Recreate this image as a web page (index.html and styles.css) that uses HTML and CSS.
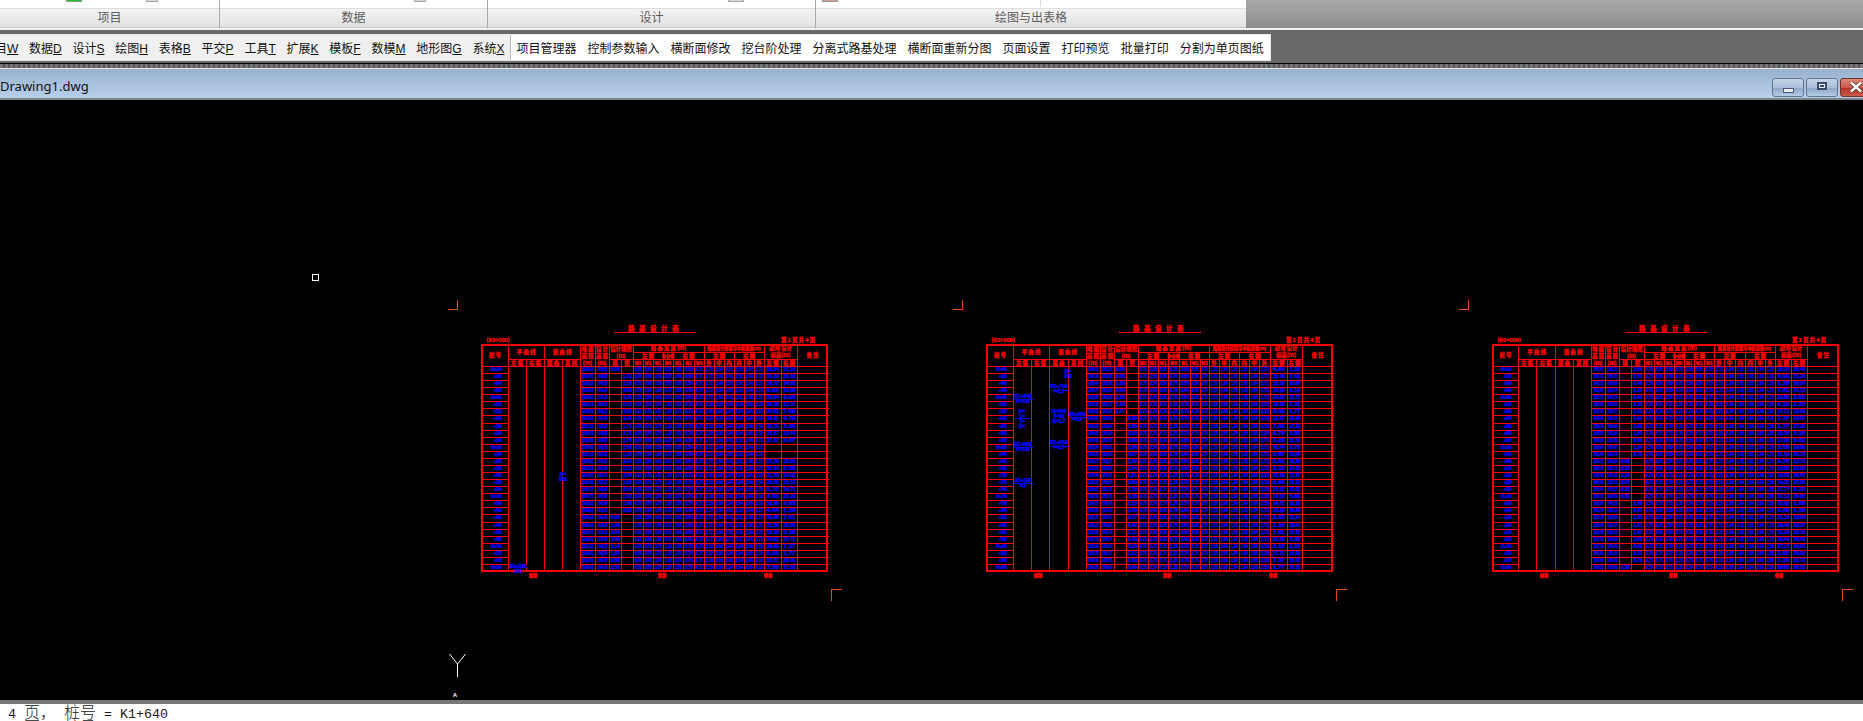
FILE: index.html
```html
<!DOCTYPE html>
<html lang="zh-CN">
<head>
    <meta charset="UTF-8">
    <title>Drawing1.dwg</title>
    <link rel="stylesheet" href="styles.css">
</head>
<body>
    <div class="ribbon">
        <div class="group group-project">
            <div class="group-body">
                <span class="chip chip-green chip-a"></span>
                <span class="chip chip-b"></span>
            </div>
            <div class="group-label">项目</div>
        </div>
        <div class="group group-data">
            <div class="group-body"><span class="chip chip-c"></span></div>
            <div class="group-label">数据</div>
        </div>
        <div class="group group-design">
            <div class="group-body"><span class="chip chip-d"></span></div>
            <div class="group-label">设计</div>
        </div>
        <div class="group group-output">
            <div class="group-body">
                <span class="chip chip-red chip-e"></span>
                <span class="tick"></span>
            </div>
            <div class="group-label">绘图与出表格</div>
        </div>
        <div class="ribbon-rest"></div>
    </div>

    <div class="toolbar-row">
        <div class="toolbar">
            <div class="menus">
                <span class="menu">项目<u>W</u></span>
                <span class="menu">数据<u>D</u></span>
                <span class="menu">设计<u>S</u></span>
                <span class="menu">绘图<u>H</u></span>
                <span class="menu">表格<u>B</u></span>
                <span class="menu">平交<u>P</u></span>
                <span class="menu">工具<u>T</u></span>
                <span class="menu">扩展<u>K</u></span>
                <span class="menu">模板<u>F</u></span>
                <span class="menu">数模<u>M</u></span>
                <span class="menu">地形图<u>G</u></span>
                <span class="menu">系统<u>X</u></span>
            </div>
            <div class="commands">
                <span class="command">项目管理器</span>
                <span class="command">控制参数输入</span>
                <span class="command">横断面修改</span>
                <span class="command">挖台阶处理</span>
                <span class="command">分离式路基处理</span>
                <span class="command">横断面重新分图</span>
                <span class="command">页面设置</span>
                <span class="command">打印预览</span>
                <span class="command">批量打印</span>
                <span class="command">分割为单页图纸</span>
            </div>
        </div>
    </div>

    <div class="mdi-edge"></div>

    <div class="titlebar">
        <span class="doc-name">Drawing1.dwg</span>
        <div class="win-buttons">
            <button class="win-btn"><span class="glyph-min"></span></button>
            <button class="win-btn"><span class="glyph-max"></span></button>
            <button class="win-btn win-close">
                <svg width="14" height="12" viewBox="0 0 14 12">
                    <path d="M2 1.5 L12 10.5 M12 1.5 L2 10.5" stroke="#5a2a2a" stroke-width="4"/>
                    <path d="M2 1.5 L12 10.5 M12 1.5 L2 10.5" stroke="#fff" stroke-width="2.4"/>
                </svg>
            </button>
        </div>
    </div>

    <div class="canvas">
        <svg id="drawing" width="1863" height="600" viewBox="0 100 1863 600"></svg>
    </div>

    <div class="status-edge"></div>
    <div class="console">
        <div class="console-line"> 4 <span class="cn">页，</span> <span class="cn">桩号</span> = K1+640</div>
        <div class="console-line"> 5 <span class="cn">页，</span> <span class="cn">桩号</span> = K1+660</div>
    </div>

    <script src="drawing.js"></script>
</body>
</html>
```

FILE: styles.css
```css
* {
    box-sizing: border-box;
}
body {
    margin: 0;
    height: 100vh;
    display: flex;
    flex-direction: column;
    overflow: hidden;
    background-color: #000;
    font-family: "Liberation Sans", "Noto Sans CJK SC", sans-serif;
    font-size: 12px;
}

/* ribbon, only its bottom edge is on screen */
.ribbon {
    display: flex;
    height: 30px;
    flex-shrink: 0;
    border-bottom: 2px solid #f4f4f4;
}
.group {
    flex-shrink: 0;
    border-right: 1px solid #a8a8a8;
}
.group-project { width: 220px; }
.group-data { width: 268px; }
.group-design { width: 328px; }
.group-output { width: 430px; border-right: none; }
.group-body {
    display: flex;
    height: 8px;
    background-color: #fff;
}
.group-label {
    height: 20px;
    line-height: 19px;
    text-align: center;
    color: #5c5c5c;
    background: linear-gradient(#f3f3f3, #e2e2e2);
    border-top: 1px solid #dedede;
    border-bottom: 1px solid #c8c8c8;
}
.chip {
    width: 12px;
    height: 2px;
    background-color: #d4d4d4;
    border: 1px solid #a8a8a8;
    border-top: none;
}
.chip-green { width: 16px; background-color: #22c02a; border-color: #8a9a8a; }
.chip-red { width: 16px; background-color: #c9a090; border-color: #999; }
.chip-a { margin-left: 66px; }
.chip-b { margin-left: 64px; }
.chip-c { margin-left: 194px; }
.chip-d { margin-left: 240px; width: 16px; }
.chip-e { margin-left: 6px; }
.tick {
    margin-left: 202px;
    width: 1px;
    height: 7px;
    background-color: #d8d8d8;
}
.ribbon-rest {
    flex: 1;
    background: linear-gradient(#a9a9a9, #8d8d8d);
}

/* toolbar */
.toolbar-row {
    height: 33px;
    flex-shrink: 0;
    padding-top: 4px;
    background-color: #686868;
}
.toolbar {
    display: flex;
    width: 1271px;
    height: 27px;
    color: #111;
    border: 1px solid #e8e8e8;
    border-left: none;
    background-color: #fff;
}
.menus {
    display: flex;
    width: 511px;
    flex-shrink: 0;
    overflow: hidden;
    align-items: center;
    background-color: #f0f0f0;
    border-right: 1px solid #b8b8b8;
}
.menu {
    flex-shrink: 0;
    padding: 0 5.4px;
    white-space: nowrap;
}
.menu:first-child {
    margin-left: -22.5px;
}
.commands {
    display: flex;
    align-items: center;
}
.command {
    flex-shrink: 0;
    padding: 0 5.5px;
    white-space: nowrap;
}

.mdi-edge {
    height: 5px;
    flex-shrink: 0;
    border-top: 1px solid #000;
    background: repeating-linear-gradient(90deg, #777 0, #777 3px, #555 3px, #555 5px);
}

/* document window title */
.titlebar {
    display: flex;
    align-items: center;
    justify-content: space-between;
    height: 32px;
    flex-shrink: 0;
    border-top: 1px solid #e6e6e6;
    border-bottom: 2px solid #7c8288;
    background: linear-gradient(#98b1cf, #b8d0ea);
}
.doc-name {
    margin-top: 4px;
    font-family: "Noto Sans", sans-serif;
    font-size: 13px;
    color: #111;
}
.win-buttons {
    display: flex;
    gap: 2px;
    margin-right: -9px;
    margin-top: 7px;
}
.win-btn {
    display: flex;
    align-items: center;
    justify-content: center;
    width: 32px;
    height: 19px;
    padding: 0;
    border: 1px solid #66758f;
    border-radius: 3px;
    background: linear-gradient(#c5d5e8 0, #a9bfd9 50%, #8ba6c6 52%, #b4cbe4 100%);
}
.win-close {
    background: linear-gradient(#dc8a7c 0, #c8584a 50%, #b03226 52%, #c85a4a 100%);
    border-color: #70332c;
}
.glyph-min {
    display: block;
    width: 11px;
    height: 5px;
    margin-top: 6px;
    background-color: #e8eef6;
    border: 1px solid #4c5a76;
}
.glyph-max {
    display: block;
    width: 10px;
    height: 8px;
    margin-top: -2px;
    background-color: #3d4a66;
    border: 2px solid #3d4a66;
    box-shadow: inset 0 0 0 1px #e8eef6;
}

/* model space */
.canvas {
    flex: 1;
    min-height: 0;
    background-color: #000;
    overflow: hidden;
}
#drawing {
    display: block;
}
#drawing .grid {
    stroke: #f00;
    stroke-width: 1;
    shape-rendering: crispEdges;
}
#drawing .frame {
    fill: none;
    stroke: #f00;
    stroke-width: 2;
    shape-rendering: crispEdges;
}
#drawing .mark {
    fill: none;
    stroke: #e64a19;
    stroke-width: 1;
    shape-rendering: crispEdges;
}
#drawing .cell {
    fill: #00f;
    stroke: #00f;
    stroke-width: 0.35;
    font-family: "Liberation Sans", sans-serif;
    font-size: 4.6px;
    font-weight: 700;
    text-anchor: middle;
}
#drawing .note {
    fill: #00f;
    stroke: #00f;
    stroke-width: 0.4;
    font-family: "Liberation Sans", sans-serif;
    font-size: 4.8px;
    font-weight: 700;
    text-anchor: middle;
}
#drawing .note-line {
    stroke: #00f;
    stroke-width: 1;
    shape-rendering: crispEdges;
}
#drawing .head {
    fill: #f00;
    stroke: #f00;
    stroke-width: 0.3;
    font-family: "Noto Sans CJK SC", sans-serif;
    font-size: 5.4px;
    font-weight: 700;
    text-anchor: middle;
}
#drawing .head-small {
    font-size: 4.2px;
}
#drawing .title {
    font-size: 6.4px;
    letter-spacing: 1.6px;
}
#drawing .ucs {
    fill: none;
    stroke: #fff;
    stroke-width: 1;
}
#drawing .ucs-label {
    fill: #fff;
    font-family: "Liberation Sans", sans-serif;
    font-size: 6px;
    font-weight: 700;
    text-anchor: middle;
}
#drawing .pickbox {
    fill: none;
    stroke: #fff;
    stroke-width: 1;
    shape-rendering: crispEdges;
}

/* command line */
.status-edge {
    height: 4px;
    flex-shrink: 0;
    background-color: #777;
}
.console {
    height: 17px;
    flex-shrink: 0;
    overflow: hidden;
    background-color: #fff;
    color: #222;
    font-family: "Liberation Mono", "Noto Sans CJK SC", monospace;
    font-size: 13.33px;
}
.console-line {
    height: 15px;
    line-height: 15px;
    white-space: pre;
}
.cn {
    font-family: "Noto Sans CJK SC", sans-serif;
    font-size: 16px;
    font-weight: 300;
}
```

FILE: drawing.js
```js
var svg = document.getElementById('drawing');
var NS = 'http://www.w3.org/2000/svg';

var ROW_TOP = 366, ROW_H = 7.07, ROWS = 29, BOTTOM = 571;

var tables = [
    {
        left: 481, start: 0,
        cols: [482,508,526,544,562,580,595,609,621,633,643,653,663,673,683,694,704,714,724,734,744,754,764,781,797,828],
        fillCol7: [0,21,22,23,24,25,26,27,28],
        noElev: [11,12],
        page: '第 1 页 共 4 页',
        notes: [
            { x: 563, y: 476, lines: ['R=', '600'] },
            { x: 518, y: 568, lines: ['K0+560', 'JD1'], rule: [508, 527, 567] }
        ]
    },
    {
        left: 986, start: 20,
        cols: [987,1013,1031,1049,1068,1086,1100,1114,1126,1138,1148,1158,1168,1179,1190,1200,1209,1219,1229,1239,1249,1259,1270,1287,1302,1333],
        fillCol7: [0,1,2,3,4,5,6],
        noElev: [],
        page: '第 2 页 共 4 页',
        notes: [
            { x: 1068, y: 373, lines: ['R=', '750'] },
            { x: 1059, y: 388, lines: ['K0+790', 'i=1.2'], rule: [1050, 1068, 390] },
            { x: 1023, y: 398, lines: ['ZH+840', 'A=180'], rule: [1013, 1032, 399] },
            { x: 1022, y: 413, lines: ['R=', 'L=', 'T=', 'E='], rule: [1014, 1029, 418] },
            { x: 1059, y: 413, lines: ['R=900', 'T=56', 'E=1.7'] },
            { x: 1077, y: 416, lines: ['K0+960', 'i=0.9'], rule: [1068, 1087, 417] },
            { x: 1023, y: 446, lines: ['HZ+960', 'A=180'], rule: [1013, 1032, 447] },
            { x: 1059, y: 444, lines: ['K1+010', 'i=1.5'], rule: [1049, 1069, 446] },
            { x: 1023, y: 482, lines: ['JD+120', 'K1'], rule: [1013, 1032, 483] }
        ]
    },
    {
        left: 1492, start: 40,
        cols: [1493,1518,1536,1555,1573,1591,1605,1619,1631,1644,1654,1664,1674,1684,1694,1704,1714,1724,1735,1745,1755,1765,1775,1791,1807,1839],
        fillCol7: [13,14,15,16,17,18,28],
        noElev: [],
        page: '第 3 页 共 4 页',
        notes: []
    }
];

var widthsA = ['0.75','3.50','3.50','0.75','3.50','3.50','0.75','1.72','1.64','1.51','1.51','1.64','1.72'];
var widthsB = ['0.75','3.75','3.75','1.25','3.75','3.75','0.75','2.18','2.06','1.94','1.94','2.06','2.18'];

function add(tag, attrs, text) {
    var el = document.createElementNS(NS, tag);
    for (var key in attrs) {
        el.setAttribute(key, attrs[key]);
    }
    if (text !== undefined) {
        el.textContent = text;
    }
    svg.appendChild(el);
    return el;
}

function line(x1, y1, x2, y2, cls) {
    add('line', { x1: x1 + 0.5, y1: y1 + 0.5, x2: x2 + 0.5, y2: y2 + 0.5, 'class': cls || 'grid' });
}

function head(x, y, text, extra) {
    add('text', { x: x, y: y, 'class': 'head' + (extra ? ' ' + extra : '') }, text);
}

// simple repeatable numbers, the table is too small to read anyway
function rnd(seed) {
    var v = Math.sin(seed * 12.9898) * 43758.5453;
    return v - Math.floor(v);
}

function drawHeader(t) {
    var c = t.cols;
    function mid(a, b) { return (c[a] + c[b]) / 2; }

    // verticals that run the whole header height
    [1,3,5,6,7,9,16,22,24].forEach(function(i) {
        line(c[i], 344, c[i], ROW_TOP);
    });
    [2,4,8,10,11,12,13,14,15,17,18,19,20,21,23].forEach(function(i) {
        line(c[i], 359, c[i], ROW_TOP);
    });
    [12,13,19].forEach(function(i) {
        line(c[i], 352, c[i], 359);
    });
    line(c[9], 352, c[22], 352);
    line(c[1], 359, c[5], 359);
    line(c[7], 359, c[24], 359);
    line(c[0], ROW_TOP, c[25], ROW_TOP);

    head(mid(0,1), 357, '桩 号');
    head(mid(1,3), 354, '平 曲 线');
    head(mid(3,5), 354, '竖 曲 线');
    head(mid(1,2), 365, '左 偏');
    head(mid(2,3), 365, '右 偏');
    head(mid(3,4), 365, '竖 曲');
    head(mid(4,5), 365, '直 线');
    head(mid(5,6), 351, '地 面');
    head(mid(5,6), 358, '高 程');
    head(mid(5,6), 365, '(m)');
    head(mid(6,7), 351, '设 计');
    head(mid(6,7), 358, '高 程');
    head(mid(6,7), 365, '(m)');
    head(mid(7,9), 351, '设计填挖');
    head(mid(7,9), 358, '(m)');
    head(mid(7,8), 365, '填');
    head(mid(8,9), 365, '挖');
    head(mid(9,16), 350, '路 基 宽 度 (m)');
    head(mid(9,12), 358, '左 侧');
    head(mid(12,13), 357.5, '中分带', 'head-small');
    head(mid(13,16), 358, '右 侧');
    ['W3','W2','W1','W0','W1','W2','W3'].forEach(function(s, i) {
        head(mid(9 + i, 10 + i), 365, s, 'head-small');
    });
    head(mid(16,22), 350, '路基设计高程与中桩高差(m)', 'head-small');
    head(mid(16,19), 358, '左 侧');
    head(mid(19,22), 358, '右 侧');
    ['外','中','内','内','中','外'].forEach(function(s, i) {
        head(mid(16 + i, 17 + i), 365, s);
    });
    head(mid(22,24), 350, '边沟 设计');
    head(mid(22,24), 357, '标高(m)');
    head(mid(22,23), 365, '左 侧');
    head(mid(23,24), 365, '右 侧');
    head(mid(24,25), 357, '备 注');
}

function drawRows(t) {
    var c = t.cols;
    for (var r = 1; r < ROWS; r++) {
        var y = Math.round(ROW_TOP + r * ROW_H);
        line(c[0], y, c[1], y);
        line(c[5], y, c[25], y);
    }
    for (var i = 1; i < 25; i++) {
        line(c[i], ROW_TOP, c[i], BOTTOM);
    }

    for (r = 0; r < ROWS; r++) {
        var base = Math.round(ROW_TOP + r * ROW_H) + 5.4;
        var stake = t.start + r;
        var m = stake * 20;
        var tail = '+' + ('00' + (m % 1000)).slice(-3);
        var isKm = r === 0 || r === ROWS - 1 || r % 7 === 4;
        var name = isKm ? 'K' + Math.floor(m / 1000) + tail : tail;
        var len = isKm ? 11 : 8;
        fit(c[1] - 6 - len / 2, base, name, len);

        cell(c, 5, base, (1024 + rnd(stake) * 40).toFixed(2));
        cell(c, 6, base, (1024 + rnd(stake + 90) * 40).toFixed(2));

        var depth = (rnd(stake + 7) * 4).toFixed(2);
        if (t.fillCol7.indexOf(r) >= 0) {
            cell(c, 7, base, depth);
        } else {
            cell(c, 8, base, depth);
        }

        var set = Math.floor((r + t.start) / 5) % 2 ? widthsB : widthsA;
        for (var k = 0; k < 13; k++) {
            cell(c, 9 + k, base, set[k]);
        }
        if (t.noElev.indexOf(r) < 0) {
            cell(c, 22, base, (rnd(stake + 31) * 40).toFixed(2));
            cell(c, 23, base, (rnd(stake + 53) * 40).toFixed(2));
        }
    }
}

// squeeze a number to a set width, like the narrow CAD text style
function fit(x, y, text, len) {
    add('text', { x: x, y: y, 'class': 'cell', textLength: len, lengthAdjust: 'spacingAndGlyphs' }, text);
}

function cell(c, i, y, text) {
    var w = c[i + 1] - c[i];
    fit((c[i] + c[i + 1]) / 2 + 0.5, y, text, Math.round(w * 0.72));
}

function drawNotes(t) {
    t.notes.forEach(function(n) {
        if (n.rule) {
            line(n.rule[0], n.rule[2], n.rule[1], n.rule[2], 'note-line');
        }
        n.lines.forEach(function(s, i) {
            add('text', { x: n.x, y: n.y + i * 5, 'class': 'note' }, s);
        });
    });
}

function drawTable(t) {
    var c = t.cols;
    var dx = t.left - 481;

    add('rect', { x: t.left + 1, y: 345, width: c[25] - t.left - 2, height: BOTTOM - 345, 'class': 'frame' });

    var cx = t.left + 173;
    add('text', { x: cx, y: 330.5, 'class': 'head title' }, '路 基 设 计 表');
    line(cx - 41, 332, cx + 41, 332);
    head(t.left + 17, 342, '(K0+000)');
    head(t.left + 317, 342, t.page);
    head(t.left + 52, 577, '编制', 'head-small');
    head(t.left + 181, 577, '复核', 'head-small');
    head(t.left + 287, 577, '审核', 'head-small');

    drawHeader(t);
    drawRows(t);
    drawNotes(t);

    // sheet corner marks
    add('path', { d: 'M' + (447.5 + dx) + ' 309.5 H' + (457.5 + dx) + ' V299.5', 'class': 'mark' });
    add('path', { d: 'M' + (841.5 + dx) + ' 589.5 H' + (831.5 + dx) + ' V600.5', 'class': 'mark' });
}

tables.forEach(drawTable);

add('rect', { x: 312.5, y: 274.5, width: 6, height: 6, 'class': 'pickbox' });
add('path', { d: 'M449.5 654 L457.5 664 L465.5 654 M457.5 664 V677', 'class': 'ucs' });
add('text', { x: 455, y: 697, 'class': 'ucs-label' }, 'A');
```
